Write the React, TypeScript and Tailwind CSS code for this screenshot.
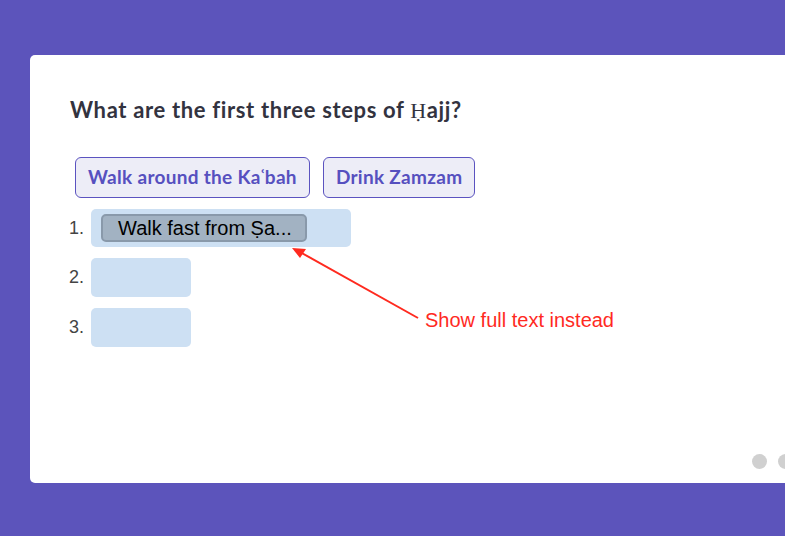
const steps = [1, 2, 3]

function Chip({ label }: { label: string }) {
  return (
    <div className="h-[41px] px-[12px] flex items-center rounded-[6px] border border-[#5b53c0] bg-[#ededf7] text-[#5650bf] text-[19px] tracking-[0.3px] font-bold font-['Lato',sans-serif]">
      {label}
    </div>
  )
}

export default function App() {
  return (
    <div className="relative w-[785px] h-[536px] overflow-hidden bg-[#5c54bb]">
      <div className="absolute left-[30px] top-[55px] w-[800px] h-[428px] rounded-[5px] bg-white pl-[39px] pt-[42px]">
        <h1 className="ml-[1px] text-[22px] leading-[26px] tracking-[0.65px] font-bold text-[#33333f] font-['Lato',sans-serif]">
          What are the first three steps of <span className="font-['Liberation_Serif',serif] font-normal">Ḥ</span>ajj?
        </h1>

        <div className="mt-[33px] ml-[6px] flex gap-[13px]">
          <Chip label="Walk around the Kaʿbah" />
          <Chip label="Drink Zamzam" />
        </div>

        <div className="mt-[11px] flex flex-col gap-[11px] font-['Liberation_Sans',sans-serif]">
          {steps.map((n) => (
            <div key={n} className="flex items-center">
              <span className="w-[22px] text-[18px] text-[#444]">{n}.</span>
              {n === 1 ? (
                <div className="w-[260px] h-[38px] rounded-[5px] bg-[#cde0f3] pl-[10px] pt-[5px]">
                  <div className="w-[206px] h-[28px] rounded-[5px] border-2 border-[#8999aa] bg-[#a2b2c2] pl-[15px] flex items-center text-[20px] text-black">
                    Walk fast from Ṣa...
                  </div>
                </div>
              ) : (
                <div className="w-[100px] h-[39px] rounded-[5px] bg-[#cde0f3]" />
              )}
            </div>
          ))}
        </div>

        <div className="absolute left-[722px] top-[399px] flex gap-[11px]">
          <div className="w-[15px] h-[15px] rounded-full bg-[#d0d0d0]" />
          <div className="w-[15px] h-[15px] rounded-full bg-[#d0d0d0]" />
        </div>
      </div>

      <svg className="absolute left-0 top-0" width="785" height="536">
        <line x1="418" y1="318" x2="300" y2="252" stroke="#ff2a1f" strokeWidth="2" />
        <polygon points="292,248 306,249 300,258" fill="#ff2a1f" />
      </svg>
      <div className="absolute left-[425px] top-[309px] text-[20px] leading-[23px] text-[#ff2a1f] font-['Liberation_Sans',sans-serif]">
        Show full text instead
      </div>
    </div>
  )
}
